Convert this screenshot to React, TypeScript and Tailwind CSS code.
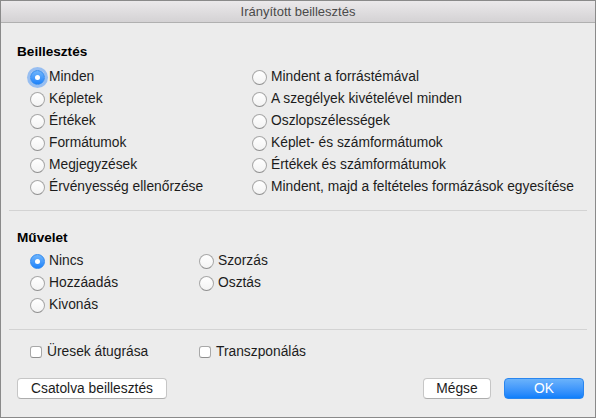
import React from "react";

const font = { fontFamily: '"Liberation Sans", Arial, sans-serif' };

function Radio({ checked, focus }: { checked?: boolean; focus?: boolean }) {
  if (checked) {
    return (
      <span
        className={`w-[15px] h-[15px] rounded-full flex items-center justify-center shrink-0 bg-gradient-to-b from-[#6db4fb] to-[#1a83fb] border border-[#2f89f0] ${
          focus ? "shadow-[0_0_0_3px_rgba(95,160,245,0.6)]" : ""
        }`}
      >
        <span className="w-[5px] h-[5px] rounded-full bg-white" />
      </span>
    );
  }
  return (
    <span className="w-[15px] h-[15px] rounded-full shrink-0 bg-gradient-to-b from-white to-[#f3f3f3] border border-[#a8a8a8] border-b-[#8f8f8f]" />
  );
}

function RadioRow({ label, checked, focus }: { label: string; checked?: boolean; focus?: boolean }) {
  return (
    <div className="flex items-center h-[22px]">
      <Radio checked={checked} focus={focus} />
      <span className="ml-[4px] text-[13.8px] text-[#1c1c1c] whitespace-nowrap">{label}</span>
    </div>
  );
}

function Check({ label }: { label: string }) {
  return (
    <div className="flex items-center h-[22px]">
      <span className="w-[12px] h-[12px] rounded-[3px] bg-white border border-[#a8a8a8] border-b-[#8f8f8f] shrink-0" />
      <span className="ml-[5px] text-[13.8px] text-[#1c1c1c] whitespace-nowrap">{label}</span>
    </div>
  );
}

export default function App() {
  const pasteLeft = ["Képletek", "Értékek", "Formátumok", "Megjegyzések", "Érvényesség ellenőrzése"];
  const pasteRight = [
    "Mindent a forrástémával",
    "A szegélyek kivételével minden",
    "Oszlopszélességek",
    "Képlet- és számformátumok",
    "Értékek és számformátumok",
    "Mindent, majd a feltételes formázások egyesítése",
  ];

  return (
    <div
      className="w-[596px] h-[418px] bg-[#ececec] border border-[#8a8a8a] flex flex-col overflow-hidden"
      style={font}
    >
      {/* title bar */}
      <div className="h-[22px] shrink-0 bg-gradient-to-b from-[#ebe9eb] to-[#d4d2d4] border-b border-[#b0b0b0] text-center text-[13px] leading-[21px] text-[#4a4a4a]">
        Irányított beillesztés
      </div>

      {/* Beillesztés */}
      <div className="pt-[21px] pl-[16px] text-[13.6px] leading-[16px] font-bold text-black">Beillesztés</div>
      <div className="mt-[6px] pl-[29px] grid grid-cols-[222px_auto]">
        <div className="flex flex-col">
          <RadioRow label="Minden" checked focus />
          {pasteLeft.map((l) => (
            <RadioRow key={l} label={l} />
          ))}
        </div>
        <div className="flex flex-col">
          {pasteRight.map((l) => (
            <RadioRow key={l} label={l} />
          ))}
        </div>
      </div>

      <div className="mt-[12px] mx-[8px] h-px bg-[#d3d3d3]" />

      {/* Művelet */}
      <div className="pt-[19px] pl-[16px] text-[13.6px] leading-[16px] font-bold text-black">Művelet</div>
      <div className="mt-[4px] pl-[29px] grid grid-cols-[169px_auto]">
        <div className="flex flex-col">
          <RadioRow label="Nincs" checked />
          <RadioRow label="Hozzáadás" />
          <RadioRow label="Kivonás" />
        </div>
        <div className="flex flex-col">
          <RadioRow label="Szorzás" />
          <RadioRow label="Osztás" />
        </div>
      </div>

      <div className="mt-[13px] mx-[8px] h-px bg-[#d3d3d3]" />

      <div className="mt-[11px] pl-[29px] grid grid-cols-[169px_auto]">
        <Check label="Üresek átugrása" />
        <Check label="Transzponálás" />
      </div>

      <div className="mt-[15px] pl-[16px] pr-[11px] flex items-center">
        <button className="w-[150px] h-[21px] rounded-[4px] bg-white border border-[#c6c6c6] border-b-[#adadad] text-[13.8px] text-[#1c1c1c] leading-none">
          Csatolva beillesztés
        </button>
        <div className="flex-1" />
        <button className="w-[68px] h-[21px] rounded-[4px] bg-white border border-[#c6c6c6] border-b-[#adadad] text-[13.8px] text-[#1c1c1c] leading-none">
          Mégse
        </button>
        <button className="ml-[13px] w-[80px] h-[21px] rounded-[4px] bg-gradient-to-b from-[#6ab2fb] to-[#0c7ffb] border border-[#2a86ef] text-[13.8px] text-white leading-none">
          OK
        </button>
      </div>
    </div>
  );
}
